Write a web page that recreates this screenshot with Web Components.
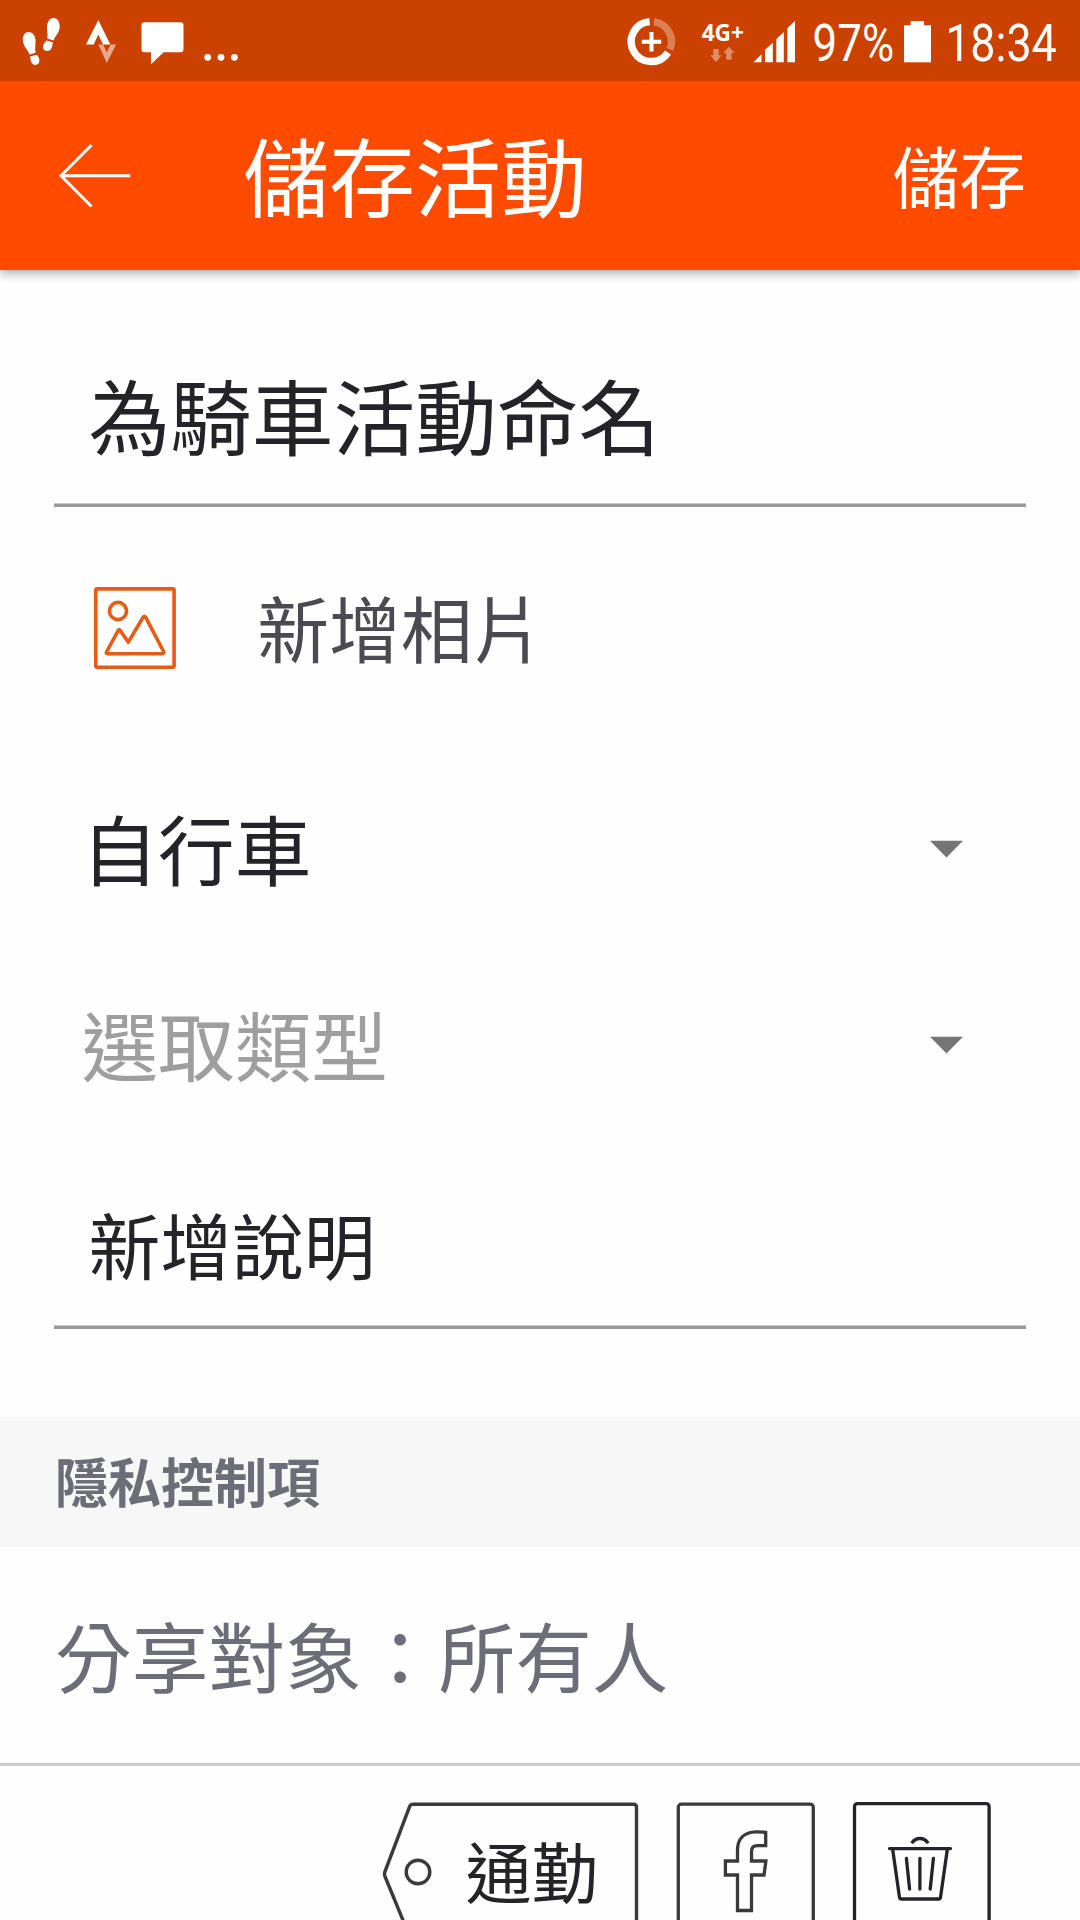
<!DOCTYPE html>
<html lang="zh-Hant">
<head>
  <meta charset="UTF-8">
  <meta name="viewport" content="width=device-width, initial-scale=1.0">
  <title>儲存活動</title>
  <style>
    body {
      margin: 0;
      width: 1080px;
      height: 1920px;
      overflow: hidden;
      background: #fefefe;
      color: #242428;
      font-family: "Noto Sans CJK TC", sans-serif;
    }
    text-field { margin: 0 54px; }
    .name { --size: 81.7px; --height: 180px; margin-top: 53px; }
    photo-row { margin-top: 45px; }
    .sport { margin-top: 47px; }
    .type { color: #9e9e9e; }
    .description { --size: 71.8px; --height: 165px; margin-top: 19px; }
    section-header { margin-top: 88px; }
  </style>
</head>
<body>

  <status-bar></status-bar>
  <app-bar>
    儲存活動
    <span slot="action">儲存</span>
  </app-bar>

  <text-field class="name">為騎車活動命名</text-field>
  <photo-row>新增相片</photo-row>
  <drop-down class="sport">自行車</drop-down>
  <drop-down class="type">選取類型</drop-down>
  <text-field class="description">新增說明</text-field>

  <section-header>隱私控制項</section-header>
  <share-row>分享對象：所有人</share-row>

  <action-row>
    <tag-button>通勤</tag-button>
    <icon-button name="facebook"></icon-button>
    <icon-button name="trash"></icon-button>
  </action-row>

  <script>
    class BaseElement extends HTMLElement {
      constructor() {
        super();
        this.attachShadow({ mode: 'open' });
      }

      connectedCallback() {
        this.shadowRoot.innerHTML = this.template();
      }
    }

    class StatusBar extends BaseElement {
      template() {
        return `
          <style>
            :host {
              position: relative;
              z-index: 1;
              display: flex;
              justify-content: space-between;
              box-sizing: border-box;
              height: 81px;
              padding: 0 20px;
              background: #cb4100;
            }
            div { display: flex; }
            .left { gap: 20px; }
            svg { display: block; height: 81px; fill: #fff; overflow: visible; }
            .clock { font-family: Roboto, sans-serif; font-size: 52px; }
            .net { font-family: "Noto Sans", sans-serif; font-size: 22.6px; font-weight: 700; }
          </style>
          <div class="left">
            <svg width="44" viewBox="20 0 44 81">
              <path d="M28.6 32c4.2 0 7 4 7 9 0 4-.8 6.500 0 11.800l-6.200 1.700C28.500 50 22.800 46.500 22.800 39.500c0-4.500 2.400-7.500 5.800-7.500z"/>
              <path d="M30 56.500l6.800-1.700c1.200 1.600 2.600 3.200 2.600 5.700 0 2.600-1.600 4.400-4 4.400-4 0-4.800-4.400-5.400-8.400z"/>
              <path d="M53.300 18c3.800 0 6.400 3.300 6.400 8.500 0 7-5.200 9.500-6 14l-6.500-1.900c1-5-.4-7-.2-11.600.2-5 2.500-9 6.300-9z"/>
              <path d="M46.600 40.400l6.200 1.800c-.4 4.600-1.400 8.800-5.600 8.800-2.600 0-4.400-1.800-4.200-4.600.2-2.400 1.800-4 3.600-6z"/>
            </svg>
            <svg width="34" viewBox="84 0 34 81">
              <path d="M98.300 20l12 24.600h-7.300l-4.700-10.200-4.600 10.200H86z"/>
              <path opacity=".55" d="M98.300 44.600h4.900l3.500 7.800 3.900-7.800h5.500L106.800 63z"/>
            </svg>
            <svg width="46" viewBox="138 0 46 81">
              <path d="M144.500 22.200h36a3 3 0 0 1 3 3v24a3 3 0 0 1-3 3h-16.800L151 64.200v-12h-6.500a3 3 0 0 1-3-3v-24a3 3 0 0 1 3-3z"/>
            </svg>
            <svg width="36" viewBox="204 0 36 81">
              <circle cx="207.700" cy="57.300" r="3.400"/>
              <circle cx="221" cy="57.300" r="3.400"/>
              <circle cx="234.400" cy="57.300" r="3.400"/>
            </svg>
          </div>
          <div>
            <svg width="60" viewBox="626 0 60 81">
              <g fill="none" stroke="#fff" stroke-width="7.400">
                <path d="M668 52.400A20 20 0 1 1 649.600 21.600"/>
                <path opacity=".33" d="M654 21.800A20 20 0 0 1 670 49.300"/>
                <path stroke-width="4" d="M641.800 41.700h19.400M651.500 32v19.400"/>
              </g>
            </svg>
            <svg width="64" viewBox="686 0 64 81">
              <text class="net" x="701.700" y="40.900">4G+</text>
              <path opacity=".4" d="M713.300 49h5.400v6.300h2.900l-5.600 6.900-5.600-6.900h2.900zM726.200 59.700h5.400v-6.600h3l-5.700-6.300-5.700 6.300h3z"/>
            </svg>
            <svg width="54" viewBox="750 0 54 81">
              <path d="M753.500 62.200l8-8v8zM765 62.200V49.800l7.800-7v19.400zM776.300 62.200V39l7.500-7v30.200zM787.400 62.200V28.300L795 21v41.200z"/>
            </svg>
            <svg width="98" viewBox="804 0 98 81">
              <text class="clock" x="812.600" y="61.200" textLength="81.500" lengthAdjust="spacingAndGlyphs">97%</text>
            </svg>
            <svg width="30" viewBox="902 0 30 81">
              <path d="M910.700 21H924v4.300h7v36.900h-27V25.300h6.700z"/>
            </svg>
            <svg width="128" viewBox="932 0 128 81">
              <text class="clock" x="945.200" y="61.200" textLength="111.600" lengthAdjust="spacingAndGlyphs">18:34</text>
            </svg>
          </div>
        `;
      }
    }
    customElements.define('status-bar', StatusBar);

    class AppBar extends BaseElement {
      template() {
        return `
          <style>
            :host {
              display: flex;
              align-items: center;
              box-sizing: border-box;
              height: 189px;
              padding: 0 54px 4px 58px;
              background: #ff4b00;
              color: #fff;
              box-shadow: 0 3px 10px rgba(0, 0, 0, .36);
              line-height: 1;
            }
            svg { width: 74px; height: 66px; padding-top: 4px; }
            .title { flex: 1; padding-left: 111px; padding-top: 1px; font-size: 86px; }
            .action { padding-top: 1px; font-size: 66.700px; }
          </style>
          <svg viewBox="58 143 74 66" fill="none" stroke="#fff" stroke-width="2.900">
            <path d="M91.600 145L61 175.700l30.600 30.700M61 175.700h69.300"/>
          </svg>
          <div class="title"><slot></slot></div>
          <div class="action"><slot name="action"></slot></div>
        `;
      }
    }
    customElements.define('app-bar', AppBar);

    class TextField extends BaseElement {
      template() {
        return `
          <style>
            :host { display: block; }
            .value {
              display: flex;
              align-items: center;
              box-sizing: border-box;
              height: var(--height);
              padding: 2px 0 0 34.400px;
              font-size: var(--size);
              line-height: 1;
            }
            .line { height: 3px; border-top: 1px solid #c9c9c9; background: #999; }
          </style>
          <div class="value"><slot></slot></div>
          <div class="line"></div>
        `;
      }
    }
    customElements.define('text-field', TextField);

    class PhotoRow extends BaseElement {
      template() {
        return `
          <style>
            :host {
              display: flex;
              align-items: center;
              gap: 80.200px;
              height: 150px;
              padding-left: 93px;
              color: #4a4a50;
              font-size: 71.800px;
              line-height: 1;
            }
            svg { width: 84px; height: 84px; margin-top: 2px; }
          </style>
          <svg viewBox="93 586 84 84" fill="none" stroke="#e65b16" stroke-width="3.600" stroke-linejoin="round">
            <rect x="95.800" y="588.900" width="78.300" height="78.300" rx="1.500"/>
            <circle cx="118" cy="611" r="8.600"/>
            <path d="M106.500 652L118.200 630.500Q119.200 628.800 120.200 630.500L128.300 642.200 143.200 617.200Q144.400 615.400 145.600 617.200L163.600 651.500Q164.300 653.700 162.300 653.700H107.800Q105.600 653.700 106.500 652Z"/>
          </svg>
          <slot></slot>
        `;
      }
    }
    customElements.define('photo-row', PhotoRow);

    class DropDown extends BaseElement {
      template() {
        return `
          <style>
            :host {
              display: flex;
              align-items: center;
              justify-content: space-between;
              height: 196px;
              padding: 0 117px 0 81.500px;
              font-size: 76.600px;
              line-height: 1;
            }
            svg { width: 33px; height: 18px; margin-top: 3px; }
          </style>
          <span><slot></slot></span>
          <svg viewBox="0 0 33 18"><path fill="#757575" d="M0 .7h33L16.500 17.500z"/></svg>
        `;
      }
    }
    customElements.define('drop-down', DropDown);

    class SectionHeader extends BaseElement {
      template() {
        return `
          <style>
            :host {
              display: flex;
              align-items: center;
              box-sizing: border-box;
              height: 130px;
              padding: 0 55px 3px;
              background: #f7f7f7;
              color: #6d6d78;
              font-size: 53px;
              font-weight: 700;
              line-height: 1;
            }
          </style>
          <slot></slot>
        `;
      }
    }
    customElements.define('section-header', SectionHeader);

    class ShareRow extends BaseElement {
      template() {
        return `
          <style>
            :host {
              display: flex;
              align-items: center;
              box-sizing: border-box;
              height: 219px;
              padding: 0 55px 1px;
              border-bottom: 3px solid #ccc;
              color: #6d6d78;
              font-size: 76.700px;
              line-height: 1;
            }
          </style>
          <slot></slot>
        `;
      }
    }
    customElements.define('share-row', ShareRow);

    class ActionRow extends BaseElement {
      template() {
        return `
          <style>
            :host {
              display: flex;
              justify-content: flex-end;
              gap: 38px;
              padding: 36px 89px 0 0;
            }
          </style>
          <slot></slot>
        `;
      }
    }
    customElements.define('action-row', ActionRow);

    class TagButton extends BaseElement {
      template() {
        return `
          <style>
            :host {
              position: relative;
              display: flex;
              align-items: center;
              box-sizing: border-box;
              width: 257px;
              height: 138px;
              padding: 0 0 3px 83.500px;
              font-size: 66.200px;
              line-height: 1;
            }
            svg { position: absolute; inset: 0; }
          </style>
          <svg width="257" height="138" viewBox="382 1802 257 138" fill="none" stroke="#3a3a3a" stroke-width="3.400">
            <path d="M413 1804.300H633.500Q636.500 1804.300 636.500 1807.300V1935Q636.500 1938 633.500 1938H413Q410.500 1938 409.500 1936L385 1876.500Q384 1874 385 1871.500L409.500 1806.800Q410.500 1804.300 413 1804.300Z"/>
            <circle cx="418" cy="1872" r="11.800"/>
          </svg>
          <slot></slot>
        `;
      }
    }
    customElements.define('tag-button', TagButton);

    class IconButton extends BaseElement {
      template() {
        const icons = {
          facebook: `
            <svg viewBox="677 1802 138 138" stroke="#3a3a3a">
              <rect x="678.300" y="1804.200" width="135" height="134" rx="3"/>
              <path d="M765.700 1832.400Q760 1831.700 756 1831.800C744 1832 737.500 1839 737.500 1850V1861H725.400V1875H737.500V1910.500H751.500V1875H764L765.900 1861H751.500V1851.500Q751.500 1845.700 757.500 1845.700H765.700Z"/>
            </svg>`,
          trash: `
            <svg viewBox="853 1802 138 138" stroke="#242428">
              <rect x="854.500" y="1803.600" width="134.600" height="134.600" rx="3"/>
              <path stroke-linecap="round" stroke-linejoin="round" d="M889.500 1848.600H950.500M892.700 1849.500L899.500 1897.500Q899.800 1899 901.300 1899H938.700Q940.200 1899 940.500 1897.500L947.300 1849.500M906.400 1858.500L909.600 1889M919.900 1858.500V1889M933.400 1858.500L930.200 1889"/>
              <path d="M911.800 1843.200Q914.500 1838.500 919.900 1838.500T928 1843.200"/>
            </svg>`
        };

        return `
          <style>
            :host { display: block; width: 138px; height: 138px; }
            svg { display: block; overflow: visible; fill: none; stroke-width: 3.300; }
          </style>
          ${icons[this.getAttribute('name')]}
        `;
      }
    }
    customElements.define('icon-button', IconButton);
  </script>

</body>
</html>
